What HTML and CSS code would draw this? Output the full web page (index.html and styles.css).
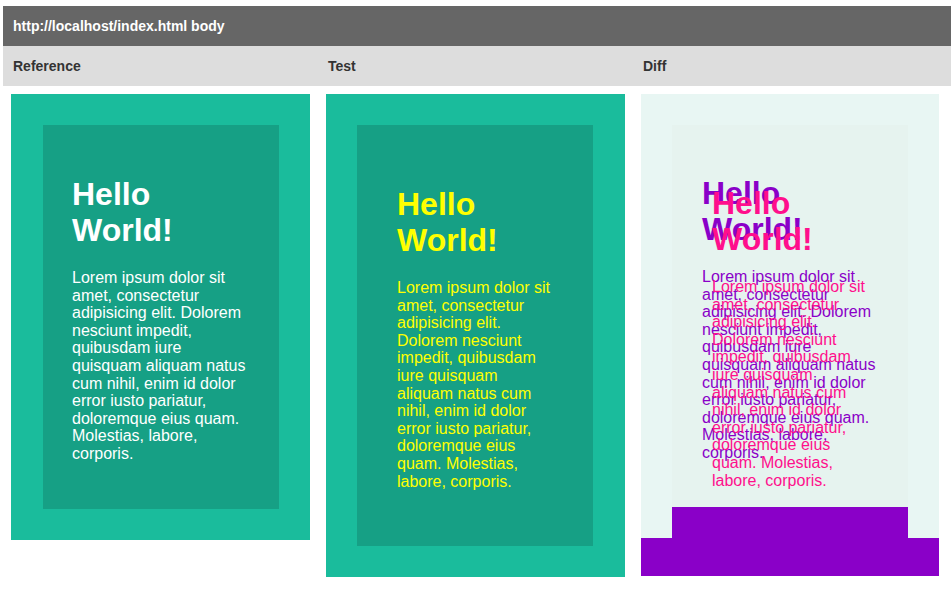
FILE: index.html
```html
<!DOCTYPE html>
<html>
<head>
<meta charset="utf-8">
<title>Diff</title>
<link rel="stylesheet" href="styles.css">
</head>
<body>
<div class="page">
  <div class="titlebar">http://localhost/index.html body</div>
  <div class="labels">
    <div class="label">Reference</div>
    <div class="label">Test</div>
    <div class="label">Diff</div>
  </div>
  <div class="panels">
    <div class="cell">
      <div class="outer ref">
        <div class="inner">
          <h1 class="title">Hello World!</h1>
          <p class="copy">Lorem ipsum dolor sit amet, consectetur adipisicing elit. Dolorem nesciunt impedit, quibusdam iure quisquam aliquam natus cum nihil, enim id dolor error iusto pariatur, doloremque eius quam. Molestias, labore, corporis.</p>
        </div>
      </div>
    </div>
    <div class="cell">
      <div class="outer test">
        <div class="inner">
          <h1 class="title">Hello World!</h1>
          <p class="copy">Lorem ipsum dolor sit amet, consectetur adipisicing elit. Dolorem nesciunt impedit, quibusdam iure quisquam aliquam natus cum nihil, enim id dolor error iusto pariatur, doloremque eius quam. Molestias, labore, corporis.</p>
        </div>
      </div>
    </div>
    <div class="cell">
      <div class="diff">
        <div class="diff-bg">
          <div class="diff-top">
            <div class="diff-inner"></div>
            <div class="diff-strip"></div>
          </div>
        </div>
        <div class="diff-text diff-ref">
          <h1 class="title">Hello World!</h1>
          <p class="copy">Lorem ipsum dolor sit amet, consectetur adipisicing elit. Dolorem nesciunt impedit, quibusdam iure quisquam aliquam natus cum nihil, enim id dolor error iusto pariatur, doloremque eius quam. Molestias, labore, corporis.</p>
        </div>
        <div class="diff-text diff-test">
          <h1 class="title">Hello World!</h1>
          <p class="copy">Lorem ipsum dolor sit amet, consectetur adipisicing elit. Dolorem nesciunt impedit, quibusdam iure quisquam aliquam natus cum nihil, enim id dolor error iusto pariatur, doloremque eius quam. Molestias, labore, corporis.</p>
        </div>
      </div>
    </div>
  </div>
</div>
</body>
</html>
```

FILE: styles.css
```css
html, body {
  margin: 0;
  padding: 0;
  background: #fff;
}

body {
  font-family: "Liberation Sans", Arial, Helvetica, sans-serif;
}

.page {
  margin: 6px 0 0 3px;
}

.titlebar {
  height: 40px;
  line-height: 40px;
  background: #666666;
  color: #ffffff;
  font-weight: bold;
  font-size: 14px;
  padding-left: 10px;
}

.labels {
  display: grid;
  grid-template-columns: 315px 315px 1fr;
  height: 40px;
  background: #dddddd;
}

.label {
  padding-left: 10px;
  line-height: 40px;
  font-size: 14px;
  font-weight: bold;
  color: #333333;
}

.panels {
  display: grid;
  grid-template-columns: 315px 315px 315px;
  align-items: start;
  padding-top: 8px;
}

.cell {
  padding-left: 8px;
}

.outer {
  width: 299px;
  box-sizing: border-box;
  background: #1abc9c;
}

.outer.ref {
  padding: 31px 31px 31px 32px;
}

.outer.test {
  padding: 31px 32px 31px 31px;
}

.inner {
  background: #16a085;
  display: flow-root;
}

.ref .inner {
  padding: 30px 30px 30px 29px;
  color: #ffffff;
}

.test .inner {
  padding: 40px;
  color: #ffff00;
}

.title {
  font-size: 32px;
  line-height: 36px;
  font-weight: bold;
  margin: 21px 0;
}

.copy {
  font-size: 16px;
  line-height: 17.6px;
  margin: 16px 0;
}

/* diff panel */
.diff {
  width: 298px;
  display: grid;
}

.diff > * {
  grid-area: 1 / 1;
}

.diff-bg {
  height: 482px;
  background: #8a00c8;
}

.diff-top {
  background: #e8f6f3;
  padding: 31px 31px 0 31px;
}

.diff-inner {
  height: 382px;
  background: #e6f3ef;
}

.diff-strip {
  height: 31px;
  background: #8a00c8;
}

.diff-text {
  display: flow-root;
}

.diff-ref {
  padding: 60px 0 0 61px;
  width: 177px;
  color: #8a00c8;
}

.diff-test {
  padding: 70px 0 0 71px;
  width: 155px;
  color: #ff0f8c;
}
```
